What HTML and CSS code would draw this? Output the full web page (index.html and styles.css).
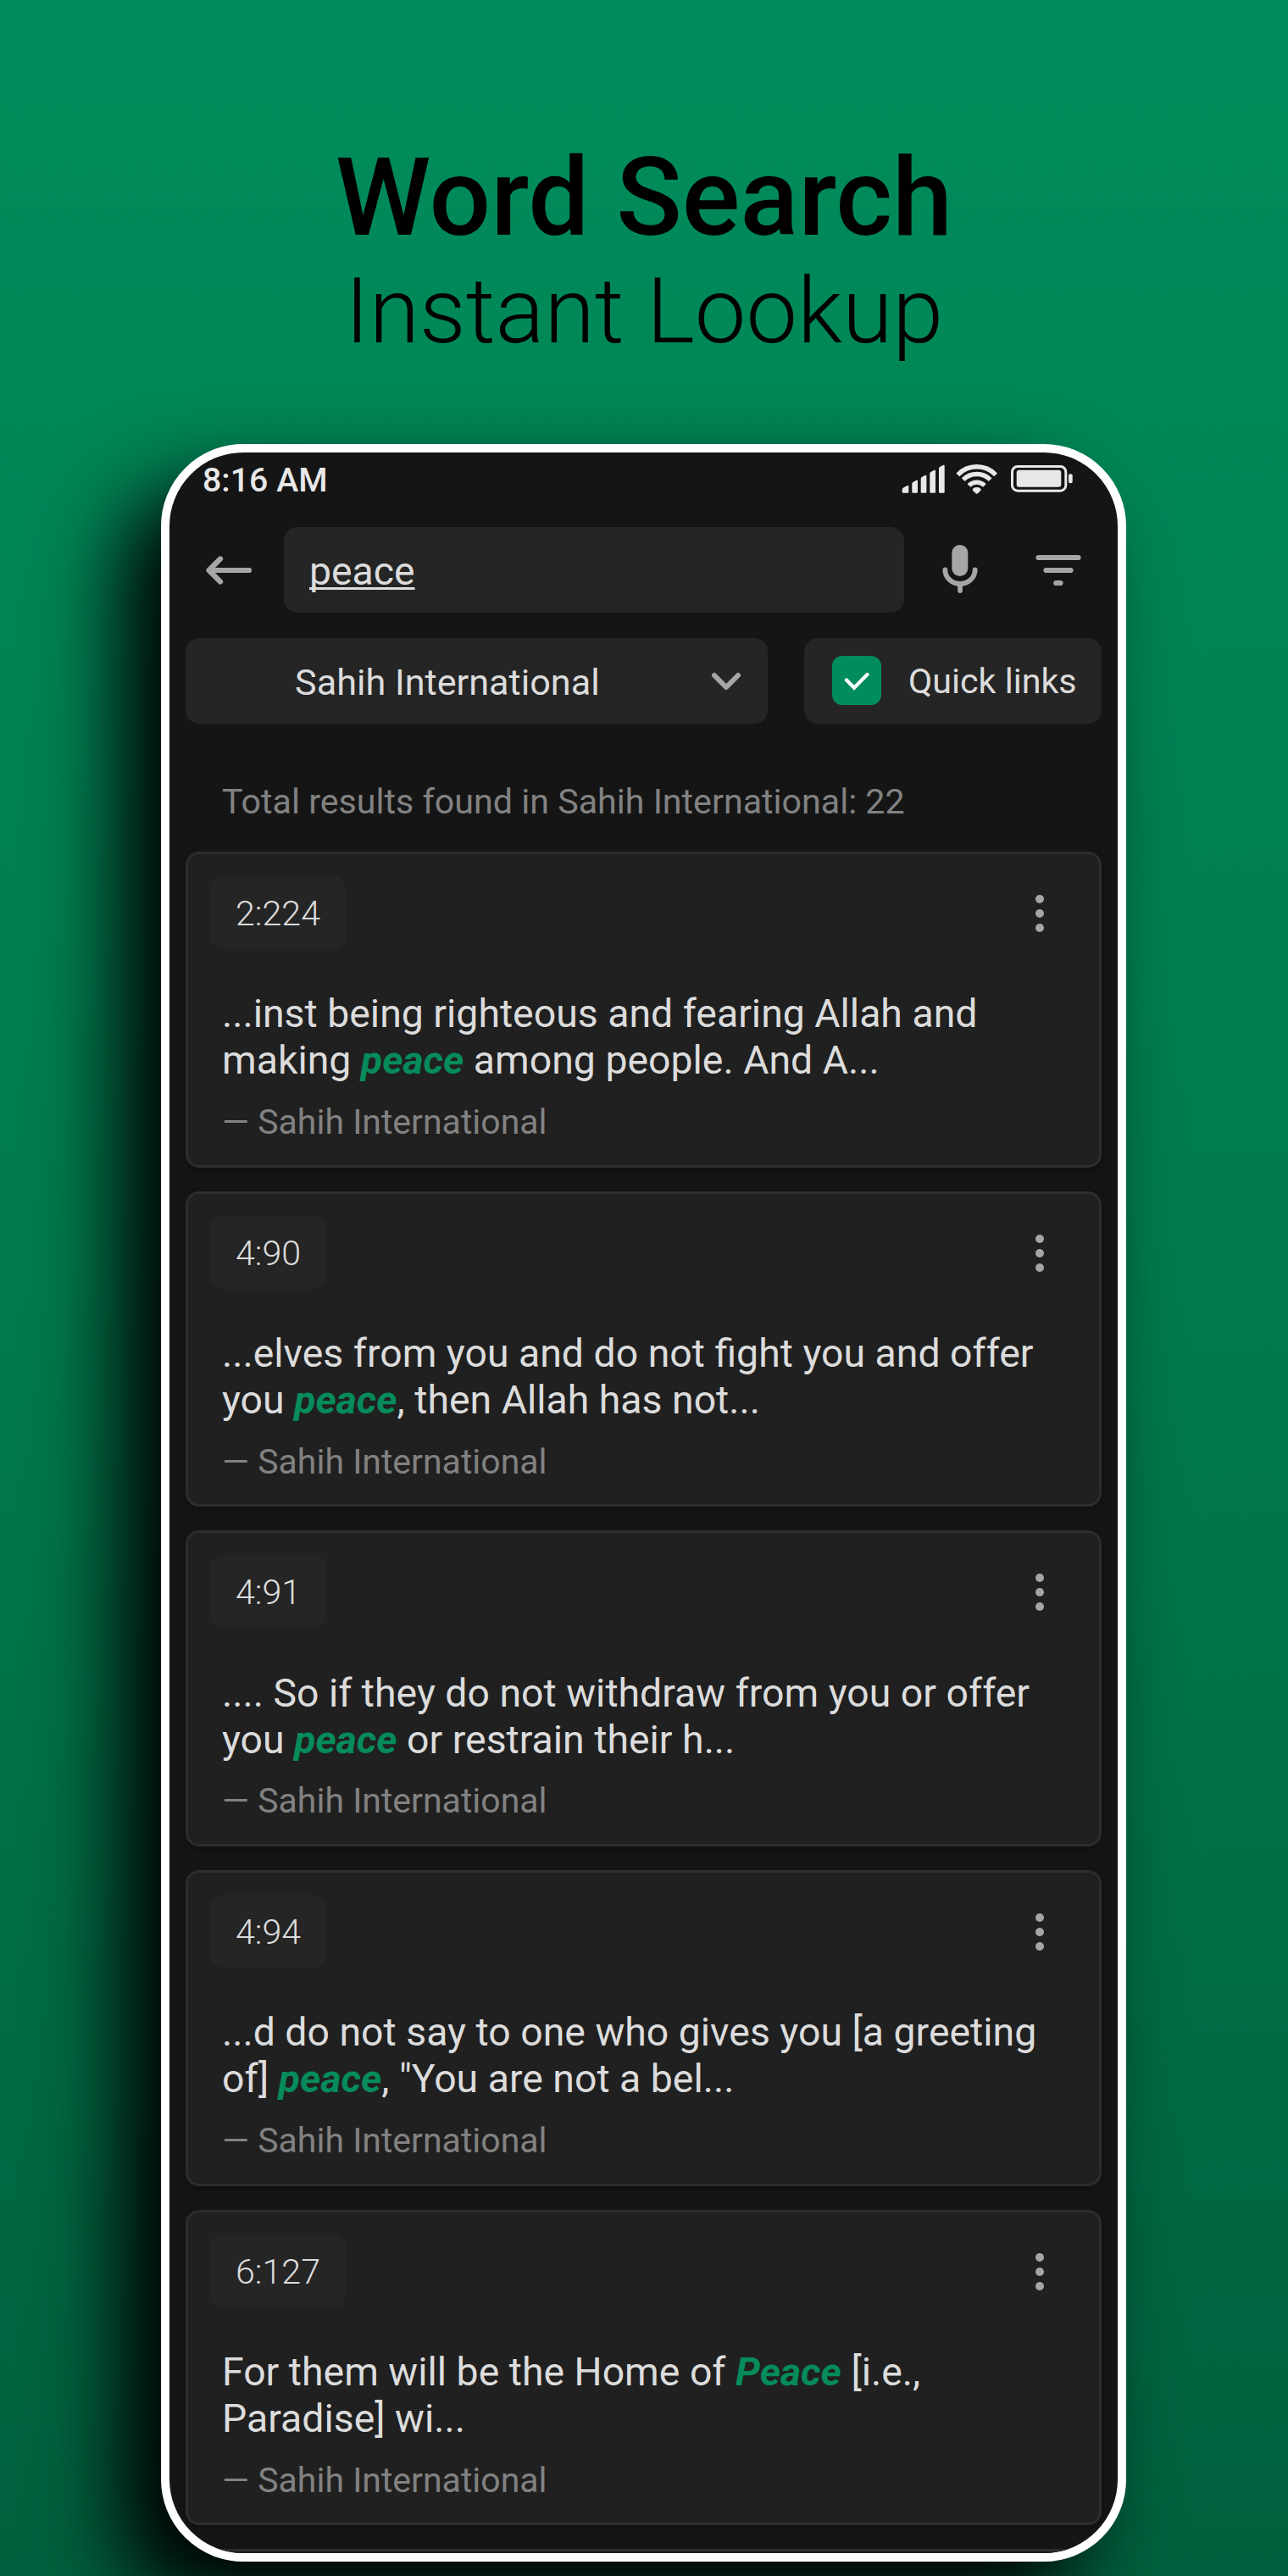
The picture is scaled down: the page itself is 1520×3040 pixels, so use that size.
FILE: index.html
```html
<!DOCTYPE html>
<html lang="en">
<head>
<meta charset="utf-8">
<title>Word Search</title>
<link rel="stylesheet" href="styles.css">
</head>
<body>
<main class="poster">
  <h1 class="title">Word Search</h1>
  <p class="subtitle">Instant Lookup</p>
  <section class="phone">
    <div class="status">
      <span class="time">8:16 AM</span>
      <svg class="status-icons" width="204" height="38" viewBox="0 0 204 38" fill="#e8e8e8">
        <path d="M1.700 32.700v-3q0-1.500 1.500-2.300l4.600-2.300q1.500-.5 1.500 1v6.600q0 1-1 1h-5.600q-1 0-1-1zM13.300 32.700V23q0-1.300 1.200-2l4-2.200q1.500-.5 1.500 1v12.900q0 1-1 1h-4.700q-1 0-1-1zM23.700 32.700V17q0-1.300 1.200-2l4-2.200q1.500-.5 1.500 1v18.900q0 1-1 1h-4.700q-1 0-1-1zM34.300 32.700V11q0-1.300 1.200-2l4-2.200q1.500-.5 1.500 1v24.900q0 1-1 1h-4.700q-1 0-1-1zM45 32.700V5q0-1.300 1.200-2l4-2.200q1.500-.5 1.500 1v30.900q0 1-1 1H46q-1 0-1-1z"/>
        <g fill="none" stroke="#e8e8e8" stroke-width="5.300">
          <path d="M67.300 12.300A31 31 0 0 1 112.100 12.300M73.700 18.200A22.500 22.500 0 0 1 105.700 18.200M80.500 25A13 13 0 0 1 98.900 25"/>
        </g>
        <path d="M84.700 30.500q0-3.500 5-3.500t5 3.500l-3.500 3.500q-1.500 1.300-3 0z"/>
        <rect x="131.500" y="2.500" width="63.300" height="28.700" rx="6.500" fill="none" stroke="#e8e8e8" stroke-width="3"/>
        <rect x="136.700" y="6.800" width="52.600" height="20" rx="3"/>
        <rect x="198" y="11.300" width="4.700" height="11" rx="2"/>
      </svg>
    </div>
    <div class="searchbar">
      <svg class="back" width="56" height="36" viewBox="0 0 56 36"><path d="M52 18H5M18 4.500L4.500 18 18 31.500"/></svg>
      <div class="field"><span class="query">peace</span></div>
      <svg class="mic" width="44" height="60" viewBox="0 0 44 60"><rect x="12.300" y="0" width="19" height="37" rx="9.500"/><path d="M4.300 29.500a17.700 16.500 0 0 0 35.400 0M22 46v8"/></svg>
      <svg class="filter" width="58" height="38" viewBox="0 0 58 38"><path d="M5.500 4H52.500M14.500 19H43.500M26.300 34H31.500"/></svg>
    </div>
    <div class="options">
      <div class="dropdown"><span class="label">Sahih International</span><svg width="36" height="22" viewBox="0 0 36 22"><path d="M4 4l14 14L32 4"/></svg></div>
      <div class="quick"><span class="check"><svg width="58" height="58" viewBox="0 0 58 58"><path d="M17 28.500l9 9.200L41.500 22"/></svg></span><span class="label">Quick links</span></div>
    </div>
    <p class="total">Total results found in Sahih International: 22</p>
    <div class="results">
      <article class="card">
        <header class="card-head"><span class="ref">2:224</span><svg class="more" width="10" height="44" viewBox="0 0 10 44"><circle cx="5" cy="5" r="5"/><circle cx="5" cy="22" r="5"/><circle cx="5" cy="39" r="5"/></svg></header>
        <p class="verse">...inst being righteous and fearing Allah and<br>making <em>peace</em> among people. And A...</p>
        <p class="source">— Sahih International</p>
      </article>
      <article class="card">
        <header class="card-head"><span class="ref">4:90</span><svg class="more" width="10" height="44" viewBox="0 0 10 44"><circle cx="5" cy="5" r="5"/><circle cx="5" cy="22" r="5"/><circle cx="5" cy="39" r="5"/></svg></header>
        <p class="verse">...elves from you and do not fight you and offer<br>you <em>peace</em>, then Allah has not...</p>
        <p class="source">— Sahih International</p>
      </article>
      <article class="card">
        <header class="card-head"><span class="ref">4:91</span><svg class="more" width="10" height="44" viewBox="0 0 10 44"><circle cx="5" cy="5" r="5"/><circle cx="5" cy="22" r="5"/><circle cx="5" cy="39" r="5"/></svg></header>
        <p class="verse">.... So if they do not withdraw from you or offer<br>you <em>peace</em> or restrain their h...</p>
        <p class="source">— Sahih International</p>
      </article>
      <article class="card">
        <header class="card-head"><span class="ref">4:94</span><svg class="more" width="10" height="44" viewBox="0 0 10 44"><circle cx="5" cy="5" r="5"/><circle cx="5" cy="22" r="5"/><circle cx="5" cy="39" r="5"/></svg></header>
        <p class="verse">...d do not say to one who gives you [a greeting<br>of] <em>peace</em>, "You are not a bel...</p>
        <p class="source">— Sahih International</p>
      </article>
      <article class="card">
        <header class="card-head"><span class="ref">6:127</span><svg class="more" width="10" height="44" viewBox="0 0 10 44"><circle cx="5" cy="5" r="5"/><circle cx="5" cy="22" r="5"/><circle cx="5" cy="39" r="5"/></svg></header>
        <p class="verse">For them will be the Home of <em>Peace</em> [i.e.,<br>Paradise] wi...</p>
        <p class="source">— Sahih International</p>
      </article>
      <article class="card"></article>
    </div>
  </section>
</main>
</body>
</html>
```
FILE: styles.css
```css
* { box-sizing: border-box; }
body { margin: 0; font-family: Roboto, "Liberation Sans", sans-serif; }
h1, p { margin: 0; font-weight: 400; }
svg { display: block; flex: none; }

.poster {
  width: 1520px;
  height: 3040px;
  overflow: hidden;
  padding-top: 158px;
  background: linear-gradient(#008d5b 0%, #007a4d 50%, #00603d 100%);
}
.title {
  font-size: 128px;
  line-height: 150px;
  font-weight: 500;
  text-align: center;
  color: #000;
}
.subtitle {
  margin-top: -4px;
  font-size: 108px;
  line-height: 126px;
  font-weight: 300;
  text-align: center;
  color: #000;
}

.phone {
  display: flex;
  flex-direction: column;
  width: 1139px;
  height: 2499px;
  margin: 94px 0 0 190px;
  border: 10px solid #fff;
  border-radius: 97px;
  background: #151515;
  overflow: hidden;
  box-shadow: -49px 50px 100px #000;
}
.phone > * { flex: none; }

.status {
  display: flex;
  justify-content: space-between;
  height: 88px;
  padding: 9px 52px 0 39px;
}
.time {
  padding-top: 1px;
  font-size: 39.3px;
  line-height: 47px;
  font-weight: 500;
  color: #e8e8e8;
}
.status-icons { margin-top: 5px; }

.searchbar {
  display: flex;
  align-items: center;
  height: 101px;
  padding-left: 42px;
}
.back, .filter { fill: none; stroke: #a6a6a6; stroke-width: 6.2; stroke-linecap: round; stroke-linejoin: round; }
.field {
  display: flex;
  align-items: center;
  width: 732px;
  height: 101px;
  margin: 0 44px 0 37px;
  padding: 3px 0 0 30px;
  border-radius: 16px;
  background: #252525;
}
.query {
  font-size: 46.3px;
  line-height: 54px;
  color: #dcdcdc;
  text-decoration: underline;
  text-decoration-thickness: 3px;
  text-decoration-skip-ink: none;
  text-underline-offset: 3px;
}
.mic { margin-right: 65px; fill: #a6a6a6; }
.mic path { fill: none; stroke: #a6a6a6; stroke-width: 5.8; stroke-linecap: round; }

.options {
  display: flex;
  gap: 43px;
  margin: 30px 19px 0;
  color: #dcdcdc;
}
.dropdown, .quick {
  display: flex;
  align-items: center;
  height: 101px;
  border-radius: 16px;
  background: #252525;
}
.label { padding-top: 3px; white-space: nowrap; }
.dropdown { width: 687px; padding: 0 31px 0 129px; justify-content: space-between; font-size: 43.2px; }
.dropdown svg { fill: none; stroke: #a6a6a6; stroke-width: 6; stroke-linecap: round; stroke-linejoin: round; }
.quick { width: 351px; padding-left: 33px; gap: 32px; font-size: 41.2px; }
.quick .label { padding-top: 1px; }
.check {
  width: 58px;
  height: 58px;
  margin-top: -1px;
  border-radius: 12px;
  background: #008d5b;
}
.check svg { fill: none; stroke: #fff; stroke-width: 4.2; stroke-linecap: round; }

.total {
  margin: 67px 0 0 62px;
  font-size: 41.2px;
  line-height: 50px;
  color: #828282;
}

.results {
  display: flex;
  flex-direction: column;
  gap: 28.1px;
  margin: 34px 19px 0;
}
.card {
  flex: none;
  height: 372.6px;
  padding: 26px 26px 0;
  border: 3px solid #2d2d2d;
  border-radius: 16px;
  background: #202020;
  box-shadow: 0 4px 8px rgba(0, 0, 0, 0.25);
}
.card-head {
  display: flex;
  justify-content: space-between;
  align-items: center;
  padding-right: 39px;
}
.ref {
  padding: 3px 30px 0;
  border-radius: 14px;
  background: #252525;
  font-size: 41.2px;
  line-height: 83px;
  font-weight: 300;
  color: #dcdcdc;
}
.more { margin-top: 2px; fill: #a6a6a6; }
.verse {
  margin: 49.4px 0 0 14px;
  font-size: 46.4px;
  line-height: 55px;
  color: #dcdcdc;
  white-space: nowrap;
}
.verse em { font-weight: 700; color: #068b5b; }
.source {
  margin: 19.6px 0 0 14px;
  font-size: 41px;
  line-height: 50px;
  color: #828282;
}
```
